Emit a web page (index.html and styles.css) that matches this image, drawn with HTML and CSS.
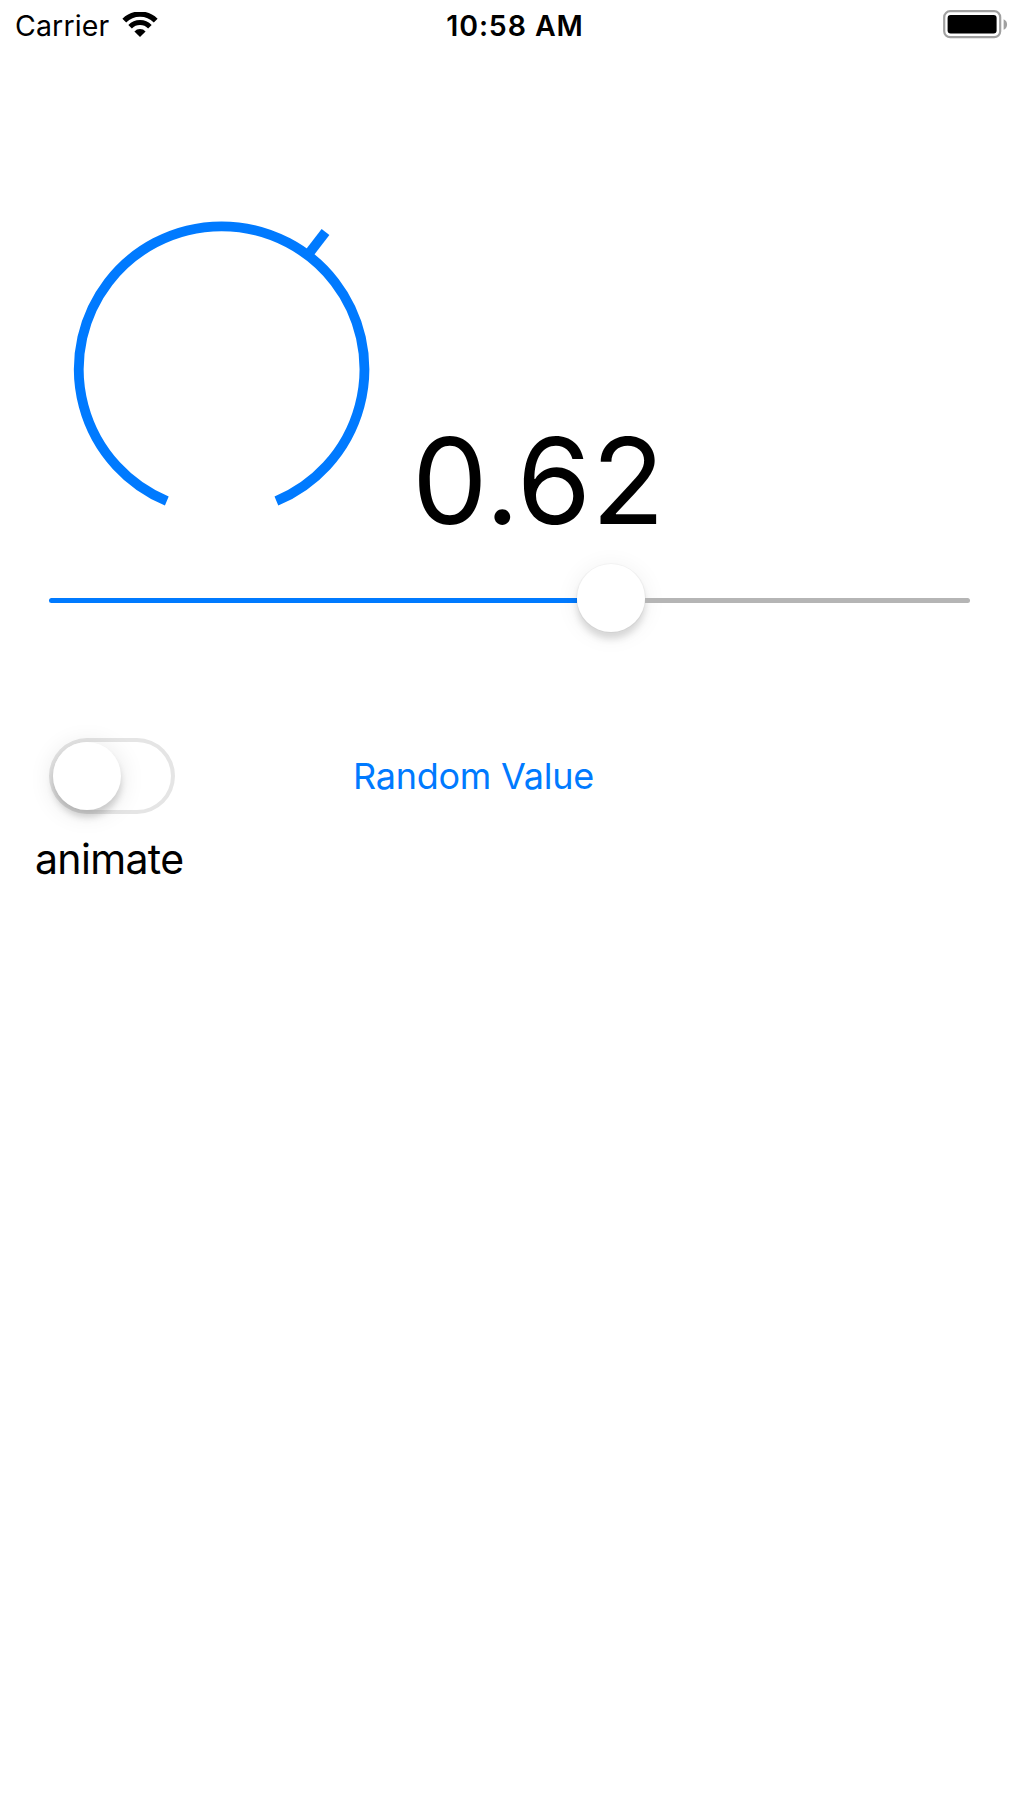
FILE: index.html
```html
<!DOCTYPE html>
<html lang="en">
<head>
<meta charset="utf-8">
<title>Knob</title>
<link rel="stylesheet" href="styles.css">
</head>
<body>
<header class="status">
  <div class="network">
    <span class="carrier">Carrier</span>
    <svg class="wifi" viewBox="0 0 36 26">
      <path d="M2.3 8.6A22.3 22.3 0 0 1 33.7 8.6" fill="none" stroke="#000" stroke-width="5.4"/>
      <path d="M8.1 14.7A14 14 0 0 1 27.9 14.7" fill="none" stroke="#000" stroke-width="5"/>
      <path d="M12.4 19.4A7.9 7.9 0 0 1 23.6 19.4L18 25Z"/>
    </svg>
  </div>
  <span class="time">10:58 AM</span>
  <svg class="battery" viewBox="0 0 66 30">
    <rect x="1.2" y="1.2" width="56" height="26" rx="6" fill="none" stroke="#a0a0a0" stroke-width="2.2"/>
    <rect x="4.6" y="5" width="49" height="18.6" rx="3"/>
    <path d="M60.6 9.2A5.8 5.8 0 0 1 60.6 19.8Z" fill="#a0a0a0"/>
  </svg>
</header>
<main class="content">
  <section class="reading">
    <svg class="knob" viewBox="0 0 300 290">
      <g fill="none" stroke="#007aff" stroke-width="9.8">
        <path d="M94.8 281A142.8 142.8 0 1 1 204.4 281"/>
        <path d="M235.6 35.3L253.5 12"/>
      </g>
    </svg>
    <output class="value">0.62</output>
  </section>
  <div class="slider"><div class="fill"></div><div class="thumb"></div><div class="rest"></div></div>
  <section class="controls">
    <div class="toggle"><div class="toggle-thumb"></div></div>
    <button class="random">Random Value</button>
  </section>
  <span class="label">animate</span>
</main>
</body>
</html>
```

FILE: styles.css
```css
* { box-sizing: border-box; }
body {
  margin: 0;
  min-height: 1812px;
  background: #fff;
  color: #000;
  font-family: Inter, sans-serif;
  overflow-x: hidden;
}
svg { display: block; }
.status {
  display: grid;
  grid-template-columns: 1fr auto 1fr;
  align-items: start;
  height: 50px;
  padding: 0 10px 0 15px;
  font-size: 28.5px;
  line-height: 34px;
}
.network { display: flex; gap: 13px; padding-top: 9px; }
.carrier { letter-spacing: 0.15px; }
.wifi { width: 36px; height: 26px; margin-top: 3px; }
.time { padding: 9px 0 0 6px; font-weight: 600; letter-spacing: 0.9px; }
.battery { width: 66px; height: 30px; margin-top: 10px; justify-self: end; }
.content { display: flex; flex-direction: column; padding: 170px 49px 0; }
.reading { display: flex; align-items: flex-start; height: 344px; padding-left: 23px; }
.knob { width: 300px; height: 290px; flex: none; }
.value {
  margin: 189px 0 0 40px;
  font-size: 120px;
  line-height: 144px;
  letter-spacing: 0.3px;
}
.slider { display: flex; align-items: center; height: 72px; }
.fill { width: 528px; height: 5px; background: #007aff; border-radius: 3px 0 0 3px; }
.thumb {
  width: 68px;
  height: 68px;
  margin-top: -4px;
  border-radius: 50%;
  background: #fff;
  box-shadow: 0 0 0 1px rgba(0,0,0,.03), 0 7px 7px rgba(0,0,0,.13), 0 3px 24px rgba(0,0,0,.07);
}
.rest { flex: 1; height: 5px; background: #b5b5b5; border-radius: 0 3px 3px 0; }
.controls { display: flex; align-items: center; height: 76px; margin-top: 102px; }
.toggle {
  width: 126px;
  height: 76px;
  padding: 4px;
  border-radius: 38px;
  box-shadow: inset 0 0 0 4px #e5e5e5;
}
.toggle-thumb {
  width: 68px;
  height: 68px;
  border-radius: 50%;
  background: #fff;
  box-shadow: 0 7px 7px rgba(0,0,0,.16), 0 3px 26px rgba(0,0,0,.11);
}
.random {
  margin: 0 0 0 178px;
  padding: 0;
  border: 0;
  background: none;
  color: #007aff;
  font: 36px/44px Inter, sans-serif;
  letter-spacing: -0.25px;
}
.label { margin: 20px 0 0 -14px; font-size: 41px; line-height: 50px; letter-spacing: -0.65px; }
```
